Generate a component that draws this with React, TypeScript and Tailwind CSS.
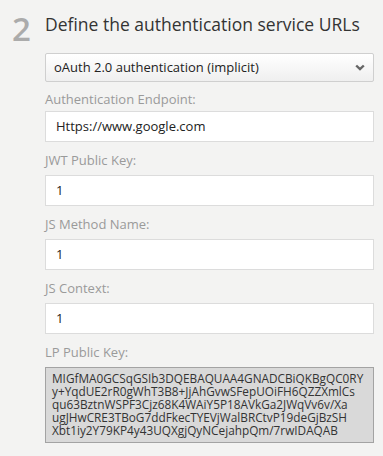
import React from "react";

const font = { fontFamily: '"Open Sans", "Noto Sans", sans-serif' };

function Field({ label, value }: { label: string; value: string }) {
  return (
    <div className="flex flex-col">
      <div className="mt-[10px] mb-[7px] h-[16px] leading-[16px] text-[13px] text-[#9a9a9a]">{label}</div>
      <div className="h-[31px] border border-[#dcdcdc] bg-white flex items-center pl-[10px] text-[13px] text-[#222]">
        {value}
      </div>
    </div>
  );
}

export default function App() {
  const keyLines = [
    "MIGfMA0GCSqGSIb3DQEBAQUAA4GNADCBiQKBgQC0RY",
    "y+YqdUE2rR0gWhT3B8+JjAhGvwSFepUOiFH6QZZXmlCs",
    "qu63BztnWSPF3Cjz68K4WAiY5P18AVkGa2JWqVv6v/Xa",
    "ugJHwCRE3TBoG7ddFkecTYEVjWalBRCtvP19deGjBzSH",
    "Xbt1iy2Y79KP4y43UQXgjQyNCejahpQm/7rwIDAQAB",
  ];
  return (
    <div className="w-[383px] h-[456px] bg-[#f3f3f2] overflow-hidden flex" style={font}>
      <div className="w-[45px] pl-[12px] pt-[11px] text-[33px] leading-[36px] font-semibold text-[#ababab]">2</div>
      <div className="w-[329px] flex flex-col">
        <div className="pt-[12px] h-[53px] text-[17.5px] leading-[24px] text-[#333]">
          Define the authentication service URLs
        </div>
        <div className="h-[29px] border border-[#cfcfcf] rounded-[2px] bg-gradient-to-b from-white to-[#efefef] flex items-center justify-between pl-[8px] pr-[8px] text-[13px] text-[#222]">
          <span>oAuth 2.0 authentication (implicit)</span>
          <svg width="10" height="7" viewBox="0 0 10 7">
            <path d="M1.2 1.5 L5 5.2 L8.8 1.5" stroke="#666" strokeWidth="2.4" fill="none" />
          </svg>
        </div>
        <div className="flex flex-col">
          <div className="mt-[9px] mb-[4px] h-[16px] leading-[16px] text-[13px] text-[#9a9a9a]">Authentication Endpoint:</div>
          <div className="h-[31px] border border-[#dcdcdc] bg-white flex items-center pl-[10px] text-[13px] text-[#222]">
            Https://www.google.com
          </div>
        </div>
        <Field label="JWT Public Key:" value="1" />
        <Field label="JS Method Name:" value="1" />
        <Field label="JS Context:" value="1" />
        <div className="mt-[10px] mb-[7px] h-[16px] leading-[16px] text-[13px] text-[#9a9a9a]">LP Public Key:</div>
        <div className="h-[76px] border border-[#a3a3a3] bg-[#d9d9d9] pl-[6px] pt-[4px] text-[11.8px] leading-[13px] text-[#333] whitespace-pre">
          {keyLines.map((l) => (
            <div key={l} className="h-[13px]">{l}</div>
          ))}
        </div>
      </div>
    </div>
  );
}
